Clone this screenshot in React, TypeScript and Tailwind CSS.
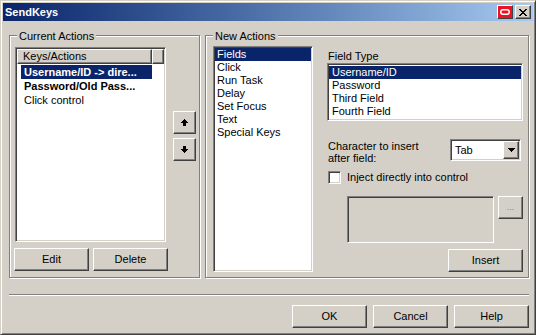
import React from 'react';

const raised =
  'border border-t-white border-l-white border-r-[#404040] border-b-[#404040] shadow-[inset_-1px_-1px_0_#808080] bg-[#d4d0c8]';
const sunken =
  'border border-t-[#808080] border-l-[#808080] border-r-white border-b-white shadow-[inset_1px_1px_0_#404040,inset_-1px_-1px_0_#d4d0c8]';

const Button: React.FC<{ label: React.ReactNode; className?: string }> = ({ label, className = '' }) => (
  <div className={`${raised} flex items-center justify-center leading-[13px] ${className}`}>{label}</div>
);

const GroupBox: React.FC<{ label: string; className?: string; children: React.ReactNode }> = ({
  label,
  className = '',
  children,
}) => (
  <div className={`relative border border-[#808080] shadow-[inset_1px_1px_0_#fff,1px_1px_0_#fff] ${className}`}>
    <span className="absolute left-[7px] top-[-6px] bg-[#d4d0c8] px-[2px] leading-[13px]">{label}</span>
    {children}
  </div>
);

const ArrowUp = () => (
  <svg width="7" height="7" viewBox="0 0 7 7" shapeRendering="crispEdges">
    <path d="M3 0h1v1h-1z M2 1h3v1h-3z M1 2h5v1h-5z M0 3h7v1h-7z M2 4h3v3h-3z" fill="#000" />
  </svg>
);

const ArrowDown = () => (
  <svg width="7" height="7" viewBox="0 0 7 7" shapeRendering="crispEdges">
    <path d="M2 0h3v3h-3z M0 3h7v1h-7z M1 4h5v1h-5z M2 5h3v1h-3z M3 6h1v1h-1z" fill="#000" />
  </svg>
);

const ComboArrow = () => (
  <svg width="7" height="4" viewBox="0 0 7 4" shapeRendering="crispEdges">
    <path d="M0 0h7v1h-7z M1 1h5v1h-5z M2 2h3v1h-3z M3 3h1v1h-1z" fill="#000" />
  </svg>
);

const CloseGlyph = () => (
  <svg width="8" height="7" viewBox="0 0 8 7" shapeRendering="crispEdges">
    <path
      d="M0 0h2v1h-2z M6 0h2v1h-2z M1 1h2v1h-2z M5 1h2v1h-2z M2 2h4v1h-4z M3 3h2v1h-2z M2 4h4v1h-4z M1 5h2v1h-2z M5 5h2v1h-2z M0 6h2v1h-2z M6 6h2v1h-2z"
      fill="#000"
    />
  </svg>
);

const newActions = ['Fields', 'Click', 'Run Task', 'Delay', 'Set Focus', 'Text', 'Special Keys'];
const fieldTypes = ['Username/ID', 'Password', 'Third Field', 'Fourth Field'];

export default function App() {
  return (
    <div className="w-[536px] h-[335px] bg-[#d4d0c8] border border-t-[#d4d0c8] border-l-[#d4d0c8] border-r-[#404040] border-b-[#404040] shadow-[inset_1px_1px_0_#fff,inset_-1px_-1px_0_#808080] p-[2px] flex flex-col text-[11px] text-black [font-family:'Liberation_Sans',Arial,sans-serif]">
      {/* title bar */}
      <div className="h-[18px] flex items-center justify-between pl-[2px] pr-[2px] bg-linear-to-r from-[#0a246a] to-[#a6caf0]">
        <span className="text-white font-bold leading-[13px]">SendKeys</span>
        <div className="flex gap-[2px]">
          <div className="w-[16px] h-[14px] border border-t-white border-l-white border-r-[#404040] border-b-[#404040] bg-[#ee1122] flex items-center justify-center">
            <svg width="10" height="6" viewBox="0 0 10 6">
              <rect x="0.75" y="0.75" width="8.5" height="4.5" rx="2.2" fill="none" stroke="#fff" strokeWidth="1.5" />
            </svg>
          </div>
          <div className={`${raised} w-[16px] h-[14px] flex items-center justify-center`}>
            <CloseGlyph />
          </div>
        </div>
      </div>

      {/* body */}
      <div className="flex-1 flex flex-col pl-[6px] pr-[4px] pt-[14px]">
        <div className="flex gap-[5px] h-[243px]">
          <GroupBox label="Current Actions" className="w-[191px] pt-[11px] pl-[4px] flex flex-col">
            <div className="flex">
              <div className={`${sunken} ml-[1px] w-[151px] h-[195px] bg-white p-[1px] flex flex-col`}>
                <div className="flex h-[15px] shrink-0">
                  <div className={`${raised} w-[135px] pl-[5px] leading-[13px]`}>Keys/Actions</div>
                  <div className={`${raised} flex-1`} />
                </div>
                <div className="pt-[1px] pl-[4px]">
                  <div className="w-[131px] h-[14px] bg-[#0a246a] text-white font-bold pl-[3px] leading-[14px] whitespace-nowrap overflow-hidden">
                    Username/ID -&gt; dire...
                  </div>
                  <div className="h-[14px] font-bold pl-[3px] leading-[14px] whitespace-nowrap">Password/Old Pass...</div>
                  <div className="h-[14px] pl-[3px] leading-[14px] whitespace-nowrap">Click control</div>
                </div>
              </div>
              <div className="ml-[7px] mt-[64px] flex flex-col gap-[4px]">
                <Button label={<ArrowUp />} className="w-[23px] h-[23px]" />
                <Button label={<ArrowDown />} className="w-[23px] h-[23px]" />
              </div>
            </div>
            <div className="flex gap-[4px] mt-[6px]">
              <Button label="Edit" className="w-[75px] h-[23px]" />
              <Button label="Delete" className="w-[75px] h-[23px]" />
            </div>
          </GroupBox>

          <GroupBox label="New Actions" className="w-[324px] pt-[10px] pl-[7px] pr-[5px] flex">
            <div className={`${sunken} w-[100px] h-[226px] bg-white p-[1px]`}>
              {newActions.map((a, i) => (
                <div
                  key={a}
                  className={`h-[13px] pl-[2px] leading-[13px] whitespace-nowrap ${i === 0 ? 'bg-[#0a246a] text-white' : ''}`}
                >
                  {a}
                </div>
              ))}
            </div>

            <div className="ml-[14px] w-[196px] flex flex-col">
              <div className="mt-[4px] pl-[1px] leading-[13px]">Field Type</div>
              <div className={`${sunken} h-[58px] bg-white p-[1px] pt-[2px]`}>
                {fieldTypes.map((f, i) => (
                  <div
                    key={f}
                    className={`h-[13px] pl-[3px] leading-[13px] ${i === 0 ? 'bg-[#0a246a] text-white' : ''}`}
                  >
                    {f}
                  </div>
                ))}
              </div>

              <div className="mt-[18px] flex justify-between items-start">
                <div className="pl-[1px] leading-[12px] pt-[1px]">
                  Character to insert
                  <br />
                  after field:
                </div>
                <div className={`${sunken} w-[71px] h-[22px] mr-[2px] bg-white p-[1px] flex`}>
                  <span className="flex-1 pl-[3px] leading-[18px]">Tab</span>
                  <div className={`${raised} w-[16px] h-full flex items-center justify-center`}>
                    <ComboArrow />
                  </div>
                </div>
              </div>

              <div className="mt-[7px] flex items-center h-[13px]">
                <div className={`${sunken} ml-[1px] w-[13px] h-[13px] bg-white`} />
                <span className="ml-[6px] leading-[13px]">Inject directly into control</span>
              </div>

              <div className="mt-[12px] ml-[20px] flex items-start">
                <div className={`${sunken} w-[148px] h-[47px]`} />
                <Button label={<span className="text-[#808080] text-[9px]">...</span>} className="ml-[4px] w-[25px] h-[23px]" />
              </div>

              <Button label="Insert" className="mt-[6px] self-end w-[75px] h-[23px]" />
            </div>
          </GroupBox>
        </div>

        <div className="mt-[16px] h-[2px] border-t border-t-[#808080] border-b border-b-white" />

        <div className="mt-[9px] flex justify-end gap-[6px]">
          <Button label="OK" className="w-[75px] h-[23px]" />
          <Button label="Cancel" className="w-[75px] h-[23px]" />
          <Button label="Help" className="w-[75px] h-[23px]" />
        </div>
      </div>
    </div>
  );
}
